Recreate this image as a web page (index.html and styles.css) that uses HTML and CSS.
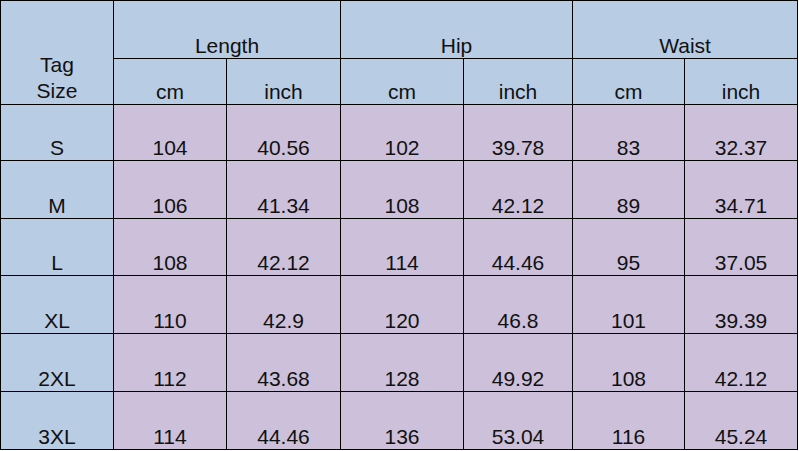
FILE: index.html
```html
<!DOCTYPE html>
<html>
<head>
<meta charset="utf-8">
<link rel="stylesheet" href="styles.css">
</head>
<body>
<table class="size-table">
  <colgroup>
    <col class="c0"><col class="c1"><col class="c2"><col class="c3"><col class="c4"><col class="c5"><col class="c6">
  </colgroup>
  <thead>
    <tr class="h1">
      <th rowspan="2" class="tag">Tag<br>Size</th>
      <th colspan="2">Length</th>
      <th colspan="2">Hip</th>
      <th colspan="2">Waist</th>
    </tr>
    <tr class="h2">
      <th>cm</th><th>inch</th><th>cm</th><th>inch</th><th>cm</th><th>inch</th>
    </tr>
  </thead>
  <tbody>
    <tr class="r1"><th>S</th><td>104</td><td>40.56</td><td>102</td><td>39.78</td><td>83</td><td>32.37</td></tr>
    <tr class="r2"><th>M</th><td>106</td><td>41.34</td><td>108</td><td>42.12</td><td>89</td><td>34.71</td></tr>
    <tr class="r3"><th>L</th><td>108</td><td>42.12</td><td>114</td><td>44.46</td><td>95</td><td>37.05</td></tr>
    <tr class="r4"><th>XL</th><td>110</td><td>42.9</td><td>120</td><td>46.8</td><td>101</td><td>39.39</td></tr>
    <tr class="r5"><th>2XL</th><td>112</td><td>43.68</td><td>128</td><td>49.92</td><td>108</td><td>42.12</td></tr>
    <tr class="r6"><th>3XL</th><td>114</td><td>44.46</td><td>136</td><td>53.04</td><td>116</td><td>45.24</td></tr>
  </tbody>
</table>
</body>
</html>
```
FILE: styles.css
```css
html, body {
  margin: 0;
  padding: 0;
  background: #ffffff;
}
.size-table {
  border-collapse: collapse;
  table-layout: fixed;
  width: 798px;
  font-family: "Liberation Sans", Arial, sans-serif;
  font-size: 21px;
  color: #111111;
}
.c0 { width: 113px; }
.c1 { width: 113px; }
.c2 { width: 114px; }
.c3 { width: 123px; }
.c4 { width: 109px; }
.c5 { width: 112px; }
.c6 { width: 113px; }
.size-table th,
.size-table td {
  border: 1px solid #000000;
  padding: 0;
  text-align: center;
  vertical-align: bottom;
  line-height: 24px;
  font-weight: normal;
}
.size-table th {
  background: #b8cce4;
}
.size-table td {
  background: #ccc0da;
}
.size-table .tag {
  line-height: 26px;
}
.h1 { height: 58px; }
.h2 { height: 46px; }
.r1 { height: 56px; }
.r2 { height: 58px; }
.r3 { height: 57px; }
.r4 { height: 58px; }
.r5 { height: 58px; }
.r6 { height: 58px; }
```
